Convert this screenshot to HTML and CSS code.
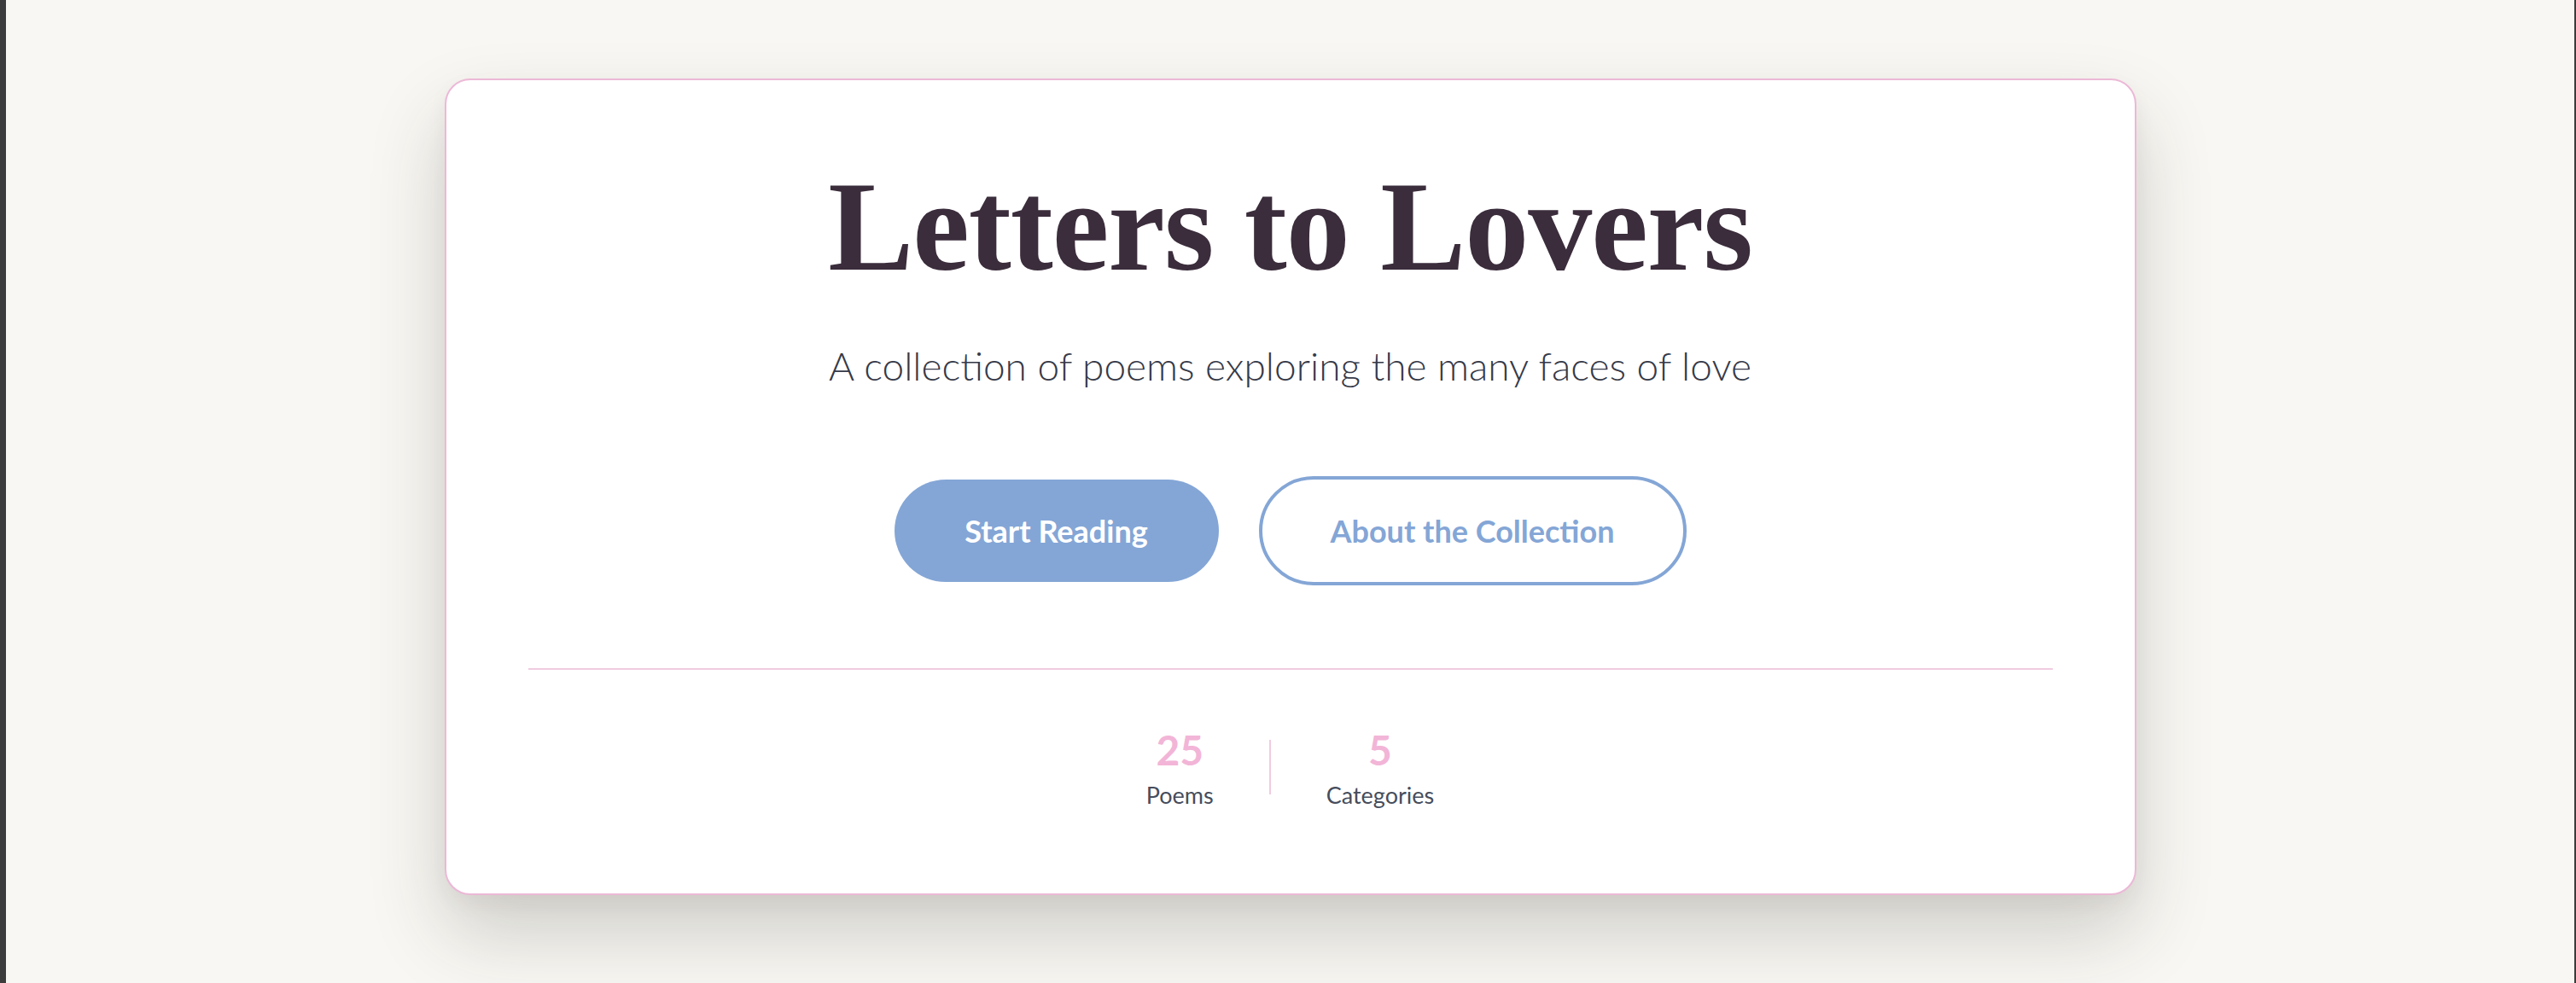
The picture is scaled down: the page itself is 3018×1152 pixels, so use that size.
FILE: index.html
```html
<!DOCTYPE html>
<html lang="en">
<head>
<meta charset="utf-8">
<title>Letters to Lovers</title>
<link rel="stylesheet" href="styles.css">
</head>
<body>
<main class="page">
  <section class="hero-card">
    <h1 class="hero-title">Letters to Lovers</h1>
    <p class="hero-subtitle">A collection of poems exploring the many faces of love</p>
    <div class="hero-actions">
      <a class="btn btn-primary" href="#">Start Reading</a>
      <a class="btn btn-outline" href="#">About the Collection</a>
    </div>
    <hr class="hero-divider">
    <div class="stats">
      <div class="stat">
        <div class="stat-number">25</div>
        <div class="stat-label">Poems</div>
      </div>
      <div class="stat-sep"></div>
      <div class="stat">
        <div class="stat-number">5</div>
        <div class="stat-label">Categories</div>
      </div>
    </div>
  </section>
</main>
</body>
</html>
```

FILE: styles.css
```css
* {
  box-sizing: border-box;
}

html, body {
  height: 100%;
}

body {
  margin: 0;
  background: #f8f7f3;
  border-left: 7px solid #3c3c3c;
  border-right: 2px solid #3c3c3c;
  font-family: Lato, "Noto Sans", sans-serif;
}

.page {
  display: flex;
  justify-content: center;
  padding-top: 92px;
}

.hero-card {
  width: 1982px;
  background: #ffffff;
  border: 2px solid #ecb8d7;
  border-radius: 30px;
  padding: 96px 96px 99px;
  box-shadow: 0 45px 90px rgba(50, 45, 35, 0.2), 0 10px 25px rgba(50, 45, 35, 0.05);
  display: flex;
  flex-direction: column;
  align-items: center;
  text-align: center;
}

.hero-title {
  margin: 0;
  font-family: "Liberation Serif", "Times New Roman", serif;
  font-weight: 700;
  font-size: 150px;
  line-height: 1;
  letter-spacing: -1px;
  color: #3b2d3c;
}

.hero-subtitle {
  margin: 54px 0 0;
  font-family: Lato, sans-serif;
  font-weight: 300;
  font-size: 46px;
  line-height: 1.5;
  color: #363a48;
}

.hero-actions {
  margin-top: 95px;
  display: flex;
  align-items: center;
  justify-content: center;
  gap: 47px;
}

.btn {
  display: inline-flex;
  align-items: center;
  justify-content: center;
  font-family: Lato, sans-serif;
  font-weight: 700;
  font-size: 36px;
  text-decoration: none;
  border-radius: 70px;
}

.btn-primary {
  width: 380px;
  height: 120px;
  background: #84a6d6;
  color: #ffffff;
}

.btn-outline {
  width: 501px;
  height: 128px;
  border: 4px solid #84a6d6;
  color: #84a6d6;
  background: #ffffff;
}

.hero-divider {
  align-self: stretch;
  margin: 97px 0 0;
  border: 0;
  height: 2px;
  background: #f1cbe1;
}

.stats {
  margin-top: 65px;
  display: flex;
  align-items: center;
  justify-content: center;
  gap: 65px;
}

.stat {
  display: flex;
  flex-direction: column;
  align-items: center;
}

.stat-number {
  font-family: Lato, sans-serif;
  font-weight: 700;
  font-size: 48px;
  line-height: 1.2;
  color: #f2b5d7;
}

.stat-label {
  margin-top: 8px;
  font-family: Lato, sans-serif;
  font-weight: 400;
  font-size: 27px;
  line-height: 1.2;
  color: #464d5c;
}

.stat-sep {
  width: 2px;
  height: 64px;
  background: #f1cbe1;
}
```
